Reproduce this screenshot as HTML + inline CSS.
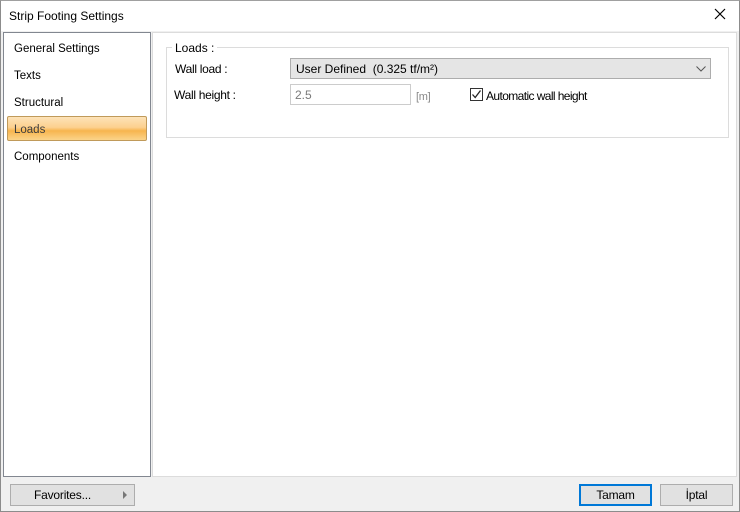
<!DOCTYPE html>
<html><head><style>
*{margin:0;padding:0;box-sizing:border-box}
body{width:740px;height:512px;background:#f0f0f0;font-family:"Liberation Sans",sans-serif;font-size:12px;color:#000;position:relative;overflow:hidden}
.win{position:absolute;left:0;top:0;width:740px;height:512px;border:1px solid #8c8c8c;border-top-color:#a0a0a0}
.title{position:absolute;left:1px;top:1px;width:738px;height:30px;background:#fff}
.title span{position:absolute;left:8px;top:8px;font-size:12px}
.close{position:absolute;left:712px;top:6px}
.left{position:absolute;left:3px;top:32px;width:148px;height:445px;background:#fff;border:1px solid #828790}
.item{position:absolute;left:10px;font-size:11.5px;letter-spacing:0}
.sel{position:absolute;left:3px;top:83px;width:140px;height:25px;border:1px solid #c09a5a;border-radius:2px;background:linear-gradient(#fde3b8 0%,#fcd08f 45%,#f7b54e 60%,#fbd48a 100%)}
.right{position:absolute;left:152px;top:32px;width:585px;height:445px;background:#fff;border:1px solid #dcdcdc}
.grp{position:absolute;left:166px;top:47px;width:563px;height:91px;border:1px solid #dcdcdc}
.grpl{position:absolute;left:172px;top:41px;background:#fff;padding:0 3px;font-size:12px}
.lbl{position:absolute;font-size:12px;letter-spacing:-0.3px}
.combo{position:absolute;left:290px;top:58px;width:421px;height:21px;background:#e5e5e5;border:1px solid #adadad}
.combo span{position:absolute;left:5px;top:3px;letter-spacing:0}
.txt{position:absolute;left:290px;top:84px;width:121px;height:21px;background:#fff;border:1px solid #ccc;color:#7a7a7a}
.txt span{position:absolute;left:4px;top:3px}
.chk{position:absolute;left:470px;top:88px;width:13px;height:13px;border:1px solid #333;background:#fff}
.btn{position:absolute;top:484px;height:22px;background:#e1e1e1;border:1px solid #adadad;text-align:center;line-height:20px;font-size:12px;letter-spacing:-0.2px}
</style></head><body>
<div class="win"></div>
<div class="title"><span>Strip Footing Settings</span>
<svg class="close" width="14" height="14" viewBox="0 0 14 14"><path d="M2 2L12 12M12 2L2 12" stroke="#000" stroke-width="1.2"/></svg></div>
<div class="left">
<div class="item" style="top:10px">General Settings</div>
<div class="item" style="top:37px">Texts</div>
<div class="item" style="top:64px">Structural</div>
<div class="sel"></div>
<div class="item" style="top:91px;color:#3c3c3c">Loads</div>
<div class="item" style="top:118px">Components</div>
</div>
<div class="right"></div>
<div class="grp"></div>
<div class="grpl">Loads :</div>
<div class="lbl" style="left:175px;top:62px">Wall load :</div>
<div class="lbl" style="left:174px;top:88px">Wall height :</div>
<div class="combo"><span>User Defined&nbsp; (0.325 tf/m²)</span>
<svg style="position:absolute;left:405px;top:7px" width="10" height="6" viewBox="0 0 10 6"><path d="M0.5 0.5L5 5L9.5 0.5" fill="none" stroke="#555" stroke-width="1"/></svg></div>
<div class="txt"><span>2.5</span></div>
<div class="lbl" style="left:416px;top:91px;color:#888;font-size:11px">[m]</div>
<div class="chk"><svg width="11" height="11" viewBox="0 0 11 11" style="position:absolute;left:0;top:0"><path d="M1.5 5.5L4.2 8.5L9.5 1.5" fill="none" stroke="#222" stroke-width="1.3"/></svg></div>
<div class="lbl" style="left:486px;top:89px;letter-spacing:-0.6px">Automatic wall height</div>
<div class="btn" style="left:10px;width:125px;padding-right:20px">Favorites...
<svg style="position:absolute;left:112px;top:6px" width="5" height="8" viewBox="0 0 5 8"><path d="M0 0L4 4L0 8Z" fill="#777"/></svg></div>
<div class="btn" style="left:579px;width:73px;border:2px solid #0078d7;line-height:18px">Tamam</div>
<div class="btn" style="left:660px;width:73px">İptal</div>
</body></html>
